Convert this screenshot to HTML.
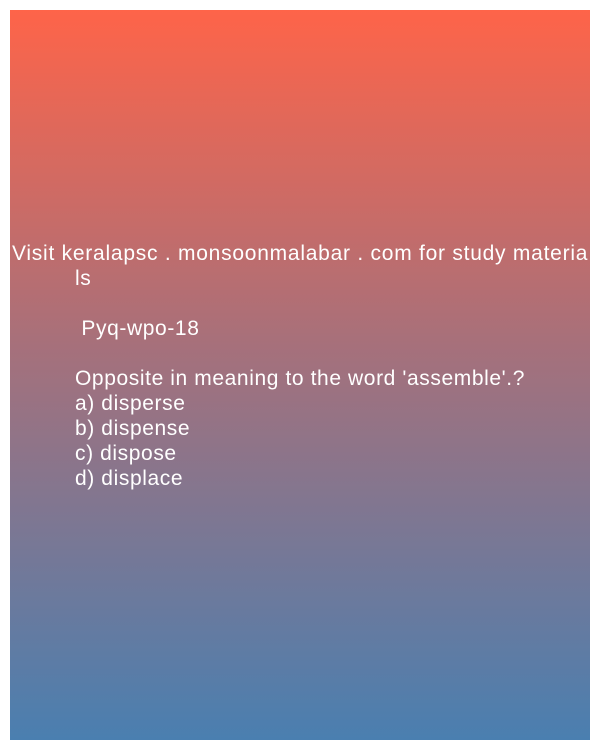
<!DOCTYPE html>
<html><head><meta charset="utf-8"><style>
html,body{margin:0;padding:0;background:#fff;width:600px;height:750px;overflow:hidden}
.box{position:absolute;left:10px;top:10px;width:580px;height:730px;background:linear-gradient(to bottom,#fe6449 0%,#a8707a 45%,#4a7fb0 100%)}
.t{position:absolute;left:2px;top:231px;color:#fff;font-family:"Liberation Sans",sans-serif;font-size:21px;line-height:25px;white-space:pre;letter-spacing:0.6px}
.f{letter-spacing:0.75px}
.i{padding-left:63px}
</style></head><body>
<div class="box"><div class="t"><div class="f">Visit keralapsc . monsoonmalabar . com for study materia</div><div class="i">ls</div><div class="i"> </div><div class="i"> Pyq-wpo-18</div><div class="i"> </div><div class="i">Opposite in meaning to the word 'assemble'.?</div><div class="i">a) disperse</div><div class="i">b) dispense</div><div class="i">c) dispose</div><div class="i">d) displace</div></div></div>
</body></html>
